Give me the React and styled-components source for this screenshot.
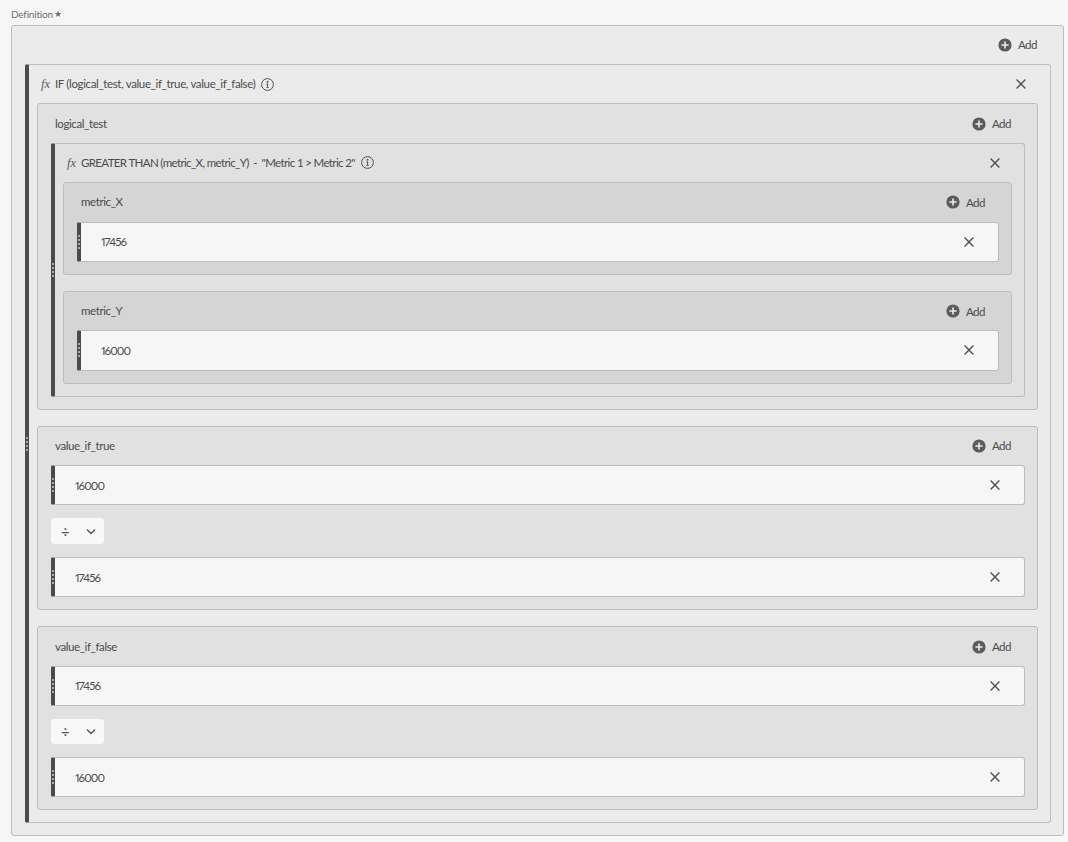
import React from "react";
import styled, { createGlobalStyle } from "styled-components";

const Global = createGlobalStyle`
  html, body { margin: 0; padding: 0; background: #f6f6f6; }
  body { font-family: "Lato", "Open Sans", sans-serif; font-size: 11.5px; color: #4b4b4b; }
  * { box-sizing: border-box; }
`;

const Page = styled.div`
  width: 1068px;
  height: 842px;
  padding: 0 4px 0 11px;
  overflow: hidden;
`;

const FieldLabel = styled.div`
  height: 24.6px;
  padding-top: 8px;
  font-size: 10px;
  line-height: 12px;
  letter-spacing: -0.2px;
  color: #6e6e6e;
  display: flex;
  gap: 1px;
`;

const Star = styled.span`
  font-size: 8.5px;
  color: #6e6e6e;
`;

const Panel = styled.div`
  position: relative;
  background: ${(p) => p.$bg};
  border: 1px solid #bdbdbd;
  border-left: ${(p) => (p.$bar ? "4px solid #4b4b4b" : "1px solid #bdbdbd")};
  border-radius: ${(p) => (p.$bar ? "2px 3px 3px 2px" : "3px")};
  padding: 0 12px 12px ${(p) => (p.$bar ? 8 : 13)}px;
`;

const Header = styled.div`
  height: 38.4px;
  display: flex;
  align-items: center;
  justify-content: space-between;
  margin: 0 ${(p) => (p.$close ? 11 : 14)}px 0 4px;
`;

const Title = styled.div`
  display: flex;
  align-items: center;
  line-height: 14px;
  color: #4b4b4b;
  letter-spacing: ${(p) => p.$ls}px;
  white-space: pre;
`;

const Fx = styled.span`
  font-family: "Liberation Serif", serif;
  font-style: italic;
  font-size: 12.5px;
  letter-spacing: 0;
  width: 14px;
  color: #5a5a5a;
`;

const InfoWrap = styled.span`
  display: inline-flex;
  margin-left: 6px;
`;

const AddButton = styled.div`
  display: flex;
  align-items: center;
  gap: 6px;
  color: #4b4b4b;
  letter-spacing: -0.5px;
`;

const CloseWrap = styled.span`
  display: inline-flex;
  width: 12px;
  height: 12px;
`;

const Stack = styled.div`
  display: flex;
  flex-direction: column;
  gap: ${(p) => p.$gap}px;
`;

const Row = styled.div`
  position: relative;
  height: 40.3px;
  background: #f6f6f6;
  border: 1px solid #bdbdbd;
  border-left: 4px solid #4b4b4b;
  border-radius: 2px 3px 3px 2px;
  padding: 0 23px 0 20px;
  display: flex;
  align-items: center;
  justify-content: space-between;
  font-variant-numeric: proportional-nums;
  letter-spacing: -0.95px;
`;

const Grip = styled.span`
  position: absolute;
  left: ${(p) => p.$left}px;
  top: 50%;
  width: 2px;
  height: 14px;
  transform: translateY(-50%);
  background: repeating-linear-gradient(to bottom, #a8a8a8 0 2px, transparent 2px 4px);
`;

const Select = styled.div`
  width: 53px;
  height: 25.8px;
  background: #f8f8f8;
  border-radius: 3px;
  display: flex;
  align-items: center;
  justify-content: space-between;
  padding: 0 8px 0 10px;
  font-size: 15px;
  color: #5a5a5a;
`;

const Plus = () => (
  <svg width="14" height="14" viewBox="0 0 14 14" aria-hidden="true">
    <circle cx="7" cy="7" r="6.6" fill="#5c5c5c" />
    <path d="M7 3.4v7.2M3.4 7h7.2" stroke="#ececec" strokeWidth="1.6" />
  </svg>
);

const Cross = () => (
  <svg width="12" height="12" viewBox="0 0 12 12" aria-hidden="true">
    <path d="M1.6 1.6l8.8 8.8M10.4 1.6l-8.8 8.8" stroke="#505050" strokeWidth="1.4" fill="none" />
  </svg>
);

const Info = () => (
  <svg width="13" height="13" viewBox="0 0 13 13" aria-hidden="true">
    <circle cx="6.5" cy="6.5" r="5.9" fill="none" stroke="#505050" strokeWidth="1" />
    <circle cx="6.5" cy="3.8" r="0.95" fill="#505050" />
    <path d="M5.3 5.6h1.8v3.3h.8v.8H5.2v-.8h.9V6.4h-.8z" fill="#505050" />
  </svg>
);

const Chevron = () => (
  <svg width="10" height="7" viewBox="0 0 10 7" aria-hidden="true">
    <path d="M1 1.5l4 4 4-4" stroke="#555" strokeWidth="1.4" fill="none" />
  </svg>
);

const Add = () => (
  <AddButton>
    <Plus />
    Add
  </AddButton>
);

const Close = () => (
  <CloseWrap>
    <Cross />
  </CloseWrap>
);

const Value = ({ children }) => (
  <Row>
    <Grip $left={-3} />
    {children}
    <Close />
  </Row>
);

const Divide = () => (
  <Select>
    <span>÷</span>
    <Chevron />
  </Select>
);

const Slot = ({ label, bg, children }) => (
  <Panel $bg={bg}>
    <Header>
      <Title $ls={-0.4}>{label}</Title>
      <Add />
    </Header>
    {children}
  </Panel>
);

const FnCard = ({ title, bg, ls, children }) => (
  <Panel $bg={bg} $bar>
    <Grip $left={-3} />
    <Header $close>
      <Title $ls={ls}>
        <Fx>fx</Fx>
        {title}
        <InfoWrap>
          <Info />
        </InfoWrap>
      </Title>
      <Close />
    </Header>
    <Stack $gap={16}>{children}</Stack>
  </Panel>
);

export default function App() {
  return (
    <Page>
      <Global />
      <FieldLabel>
        Definition <Star>★</Star>
      </FieldLabel>
      <Panel $bg="#ebebeb">
        <Header>
          <span />
          <Add />
        </Header>
        <FnCard title="IF (logical_test, value_if_true, value_if_false)" bg="#ebebeb" ls={-0.36}>
          <Slot label="logical_test" bg="#e1e1e1">
            <FnCard title={'GREATER THAN (metric_X, metric_Y)  -  "Metric 1 > Metric 2"'} bg="#e1e1e1" ls={-0.63}>
              <Slot label="metric_X" bg="#d5d5d5">
                <Value>17456</Value>
              </Slot>
              <Slot label="metric_Y" bg="#d5d5d5">
                <Value>16000</Value>
              </Slot>
            </FnCard>
          </Slot>
          <Slot label="value_if_true" bg="#e1e1e1">
            <Stack $gap={13}>
              <Value>16000</Value>
              <Divide />
              <Value>17456</Value>
            </Stack>
          </Slot>
          <Slot label="value_if_false" bg="#e1e1e1">
            <Stack $gap={12.6}>
              <Value>17456</Value>
              <Divide />
              <Value>16000</Value>
            </Stack>
          </Slot>
        </FnCard>
      </Panel>
    </Page>
  );
}
